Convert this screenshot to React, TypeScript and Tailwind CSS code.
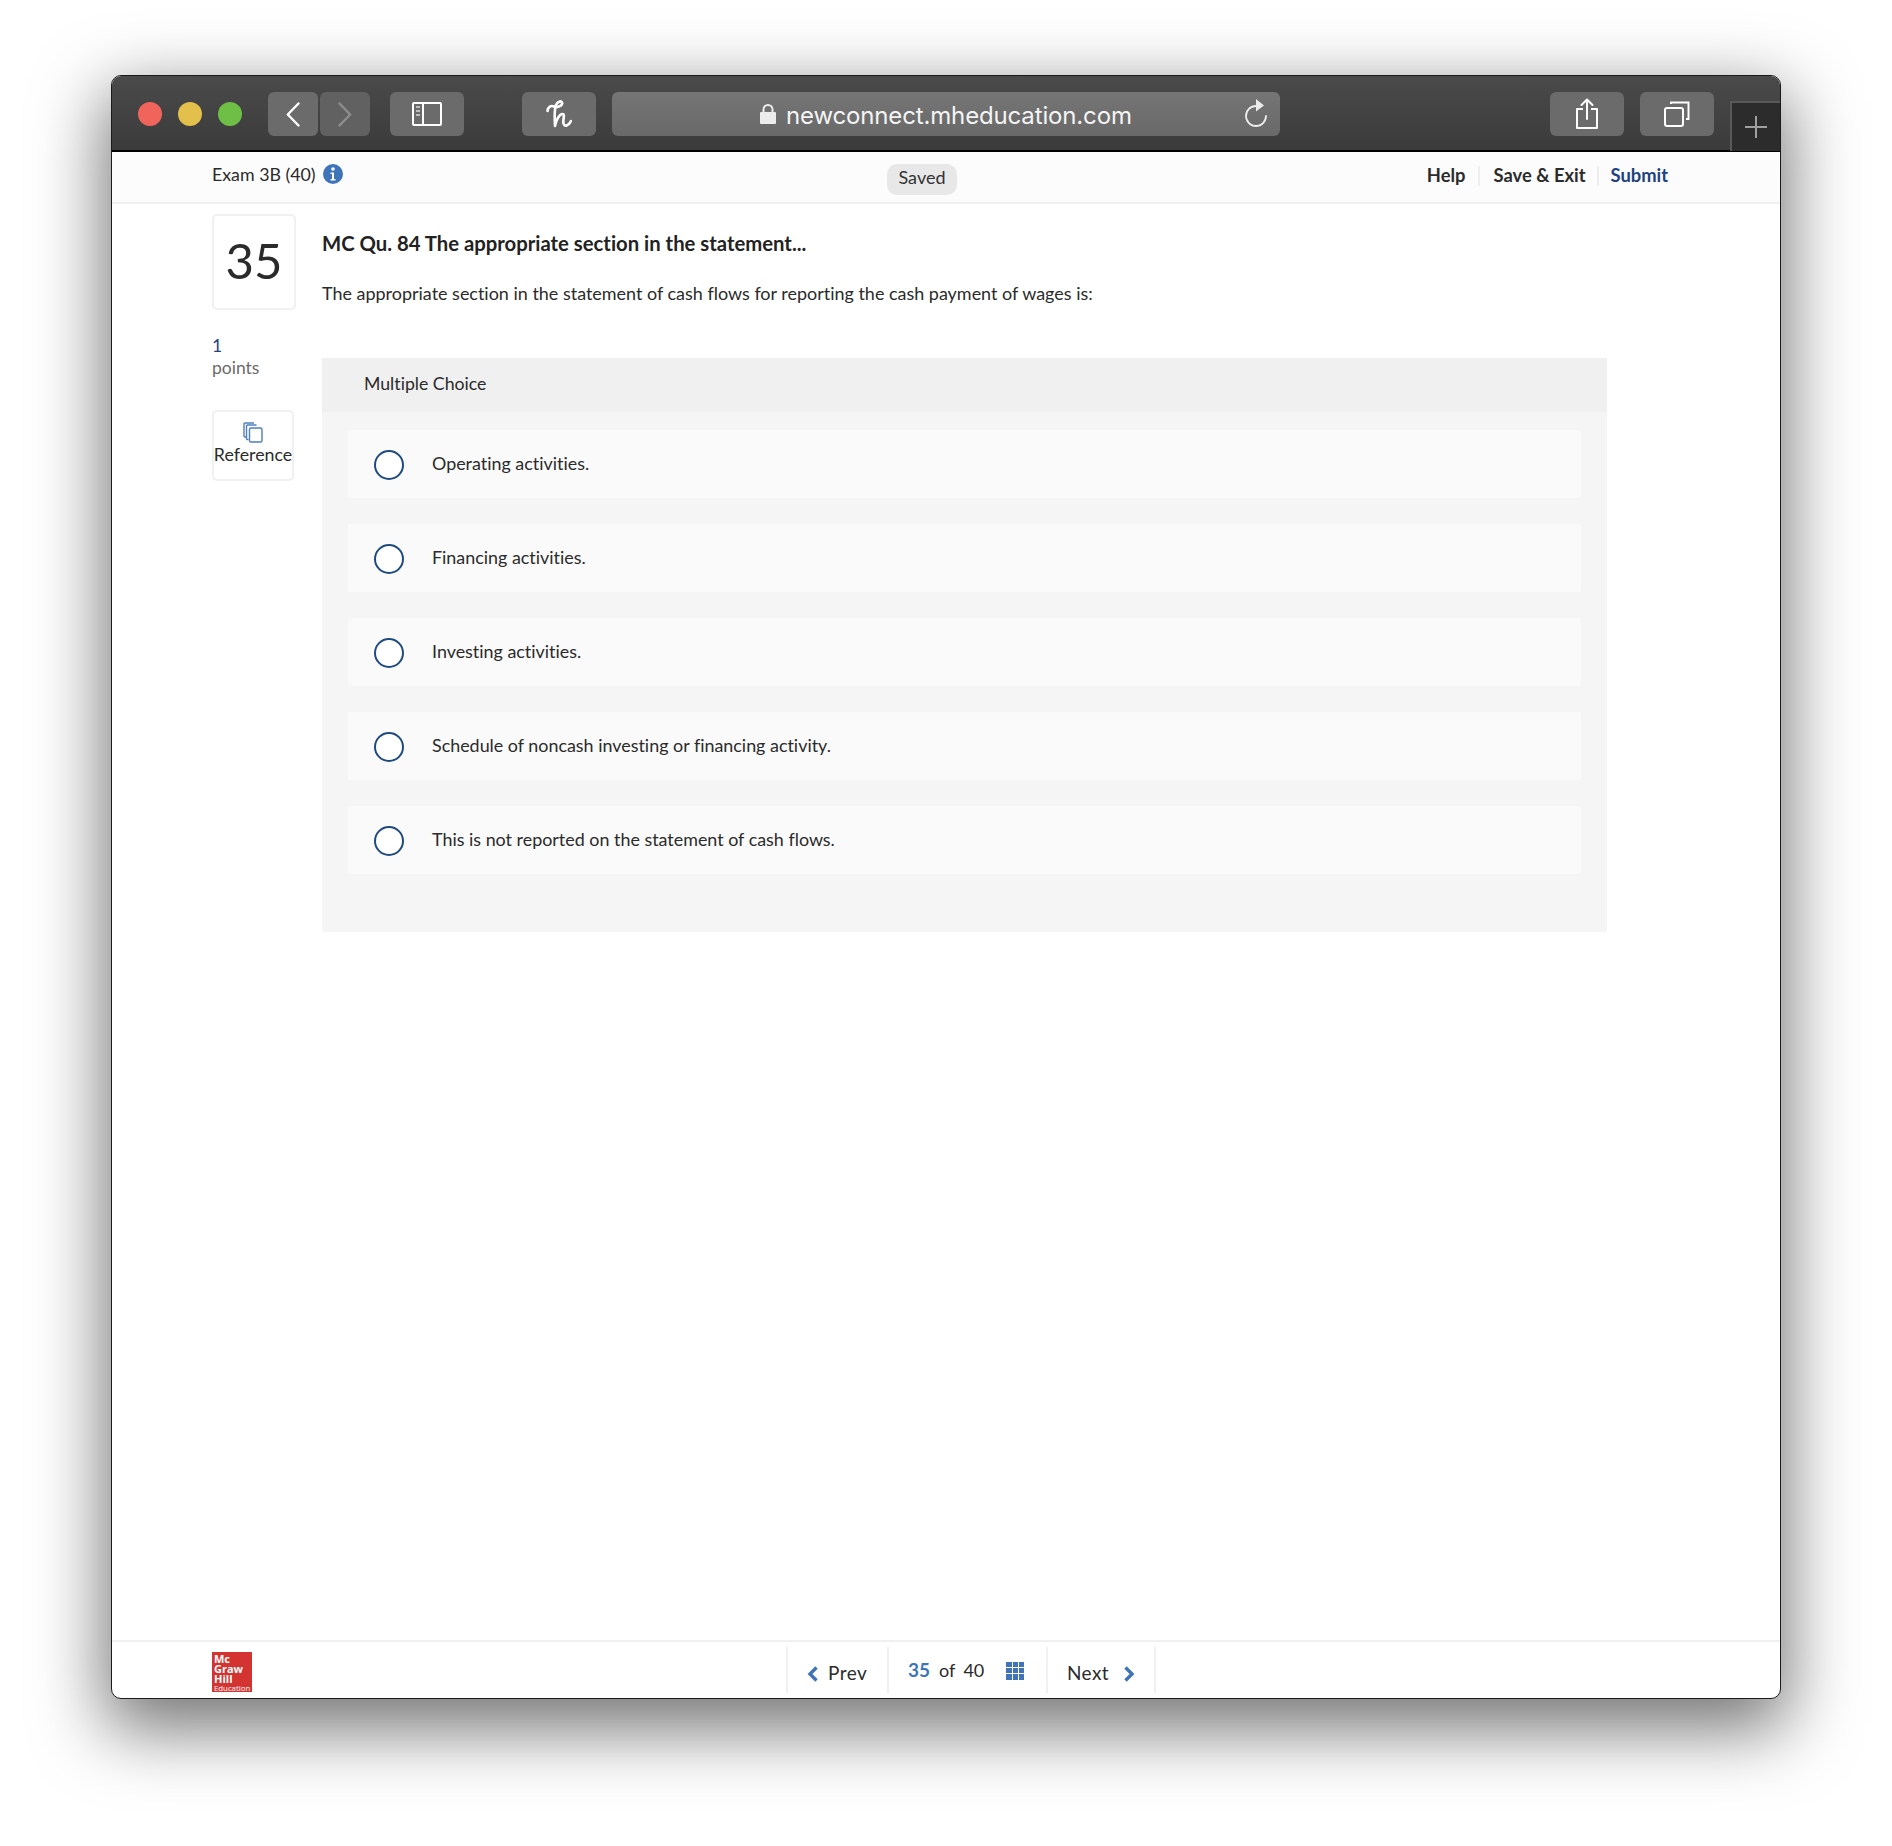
import React from "react";

const sans = "font-['Lato','Open_Sans',sans-serif] [font-variant-ligatures:none]";

function ToolBtn({ w, dim, children, className = "" }: { w: string; dim?: boolean; children?: React.ReactNode; className?: string }) {
  return (
    <div className={`${w} h-[44px] rounded-[6px] flex items-center justify-center ${dim ? "bg-[#616161]" : "bg-[#6b6b6b]"} ${className}`}>
      {children}
    </div>
  );
}

const options = [
  "Operating activities.",
  "Financing activities.",
  "Investing activities.",
  "Schedule of noncash investing or financing activity.",
  "This is not reported on the statement of cash flows.",
];

export default function App() {
  return (
    <div className={`w-[1892px] h-[1846px] bg-white pt-[75px] pl-[111px] ${sans}`}>
      <div className="w-[1670px] h-[1624px] rounded-[10px] border border-[#1a1a1a] bg-white flex flex-col overflow-hidden shadow-[0_24px_70px_6px_rgba(0,0,0,0.55)]">
        {/* title bar */}
        <div className="h-[76px] shrink-0 bg-[linear-gradient(#4a4a4a,#3b3b3b)] border-b-2 border-black flex items-start pt-[16px] pl-[26px]">
          <div className="flex gap-[16px] pt-[10px] mr-[26px]">
            <div className="w-[24px] h-[24px] rounded-full bg-[#f1645c]" />
            <div className="w-[24px] h-[24px] rounded-full bg-[#e3bf4b]" />
            <div className="w-[24px] h-[24px] rounded-full bg-[#6fbf46]" />
          </div>
          <div className="flex gap-[2px] mr-[20px]">
            <ToolBtn w="w-[50px]">
              <svg width="14" height="25" viewBox="0 0 14 25" fill="none" stroke="#fff" strokeWidth="2.4" strokeLinecap="round" strokeLinejoin="round"><path d="M12.5 1.5 1.8 12.5l10.7 11" /></svg>
            </ToolBtn>
            <ToolBtn w="w-[50px]" dim>
              <svg width="14" height="25" viewBox="0 0 14 25" fill="none" stroke="#8e8e8e" strokeWidth="2.4" strokeLinecap="round" strokeLinejoin="round"><path d="M1.5 1.5 12.2 12.5 1.5 23.5" /></svg>
            </ToolBtn>
          </div>
          <ToolBtn w="w-[74px]" className="mr-[58px]">
            <svg width="30" height="24" viewBox="0 0 30 24" fill="none"><rect x="1" y="1" width="28" height="22" rx="1" stroke="#fff" strokeWidth="2" /><path d="M11 1v22" stroke="#fff" strokeWidth="2" /><path d="M4 5h4M4 9h4M4 13h4" stroke="#bdbdbd" strokeWidth="2" /></svg>
          </ToolBtn>
          <ToolBtn w="w-[74px]" className="mr-[16px]">
            <svg width="26" height="28" viewBox="0 0 26 28" fill="none" stroke="#fff" strokeWidth="2.600" strokeLinecap="round" strokeLinejoin="round"><path d="M1.500 11C2 7 5 5 8 6.500C12 8.500 17 5 16 2.500C15 .5 11.500 1.500 10 5C8.500 9 8.500 18 9 26C10 20 13.500 14 16.500 14C19.500 14 16.500 20 17.500 23.500C18.500 27 22.500 26 25 21" /></svg>
          </ToolBtn>
          <div className="w-[668px] h-[44px] rounded-[6px] bg-[linear-gradient(#757575,#696969)] flex items-center pl-[148px] pr-[11px] mr-[270px]">
            <svg width="16" height="20" viewBox="0 0 16 20" className="mr-[10px] shrink-0"><path d="M3.500 9V5.500a4.500 4.500 0 0 1 9 0V9" fill="none" stroke="#ececec" strokeWidth="2" /><rect x="0" y="8" width="16" height="12" rx="1" fill="#ececec" /></svg>
            <span className="font-['Inter',sans-serif] text-[24px] pt-[3px] leading-[39px] text-[#f4f4f4] whitespace-nowrap tracking-[-0.15px]">newconnect.mheducation.com</span>
            <svg width="26" height="30" viewBox="0 0 26 30" className="ml-auto" fill="none"><path d="M13 7A10 10 0 1 0 23 17" stroke="#ececec" strokeWidth="1.800" strokeLinecap="round" /><path d="M13 0l8 6.500-8 6z" fill="#ececec" /></svg>
          </div>
          <ToolBtn w="w-[74px]" className="mr-[16px]">
            <svg width="24" height="32" viewBox="0 0 24 32" fill="none" stroke="#fff" strokeWidth="2" strokeLinejoin="round"><path d="M8 11H2v19h20V11h-6" /><path d="M12 21V2M6.500 7 12 1.500 17.500 7" strokeLinecap="round" /></svg>
          </ToolBtn>
          <ToolBtn w="w-[74px]" className="mr-[16px]">
            <svg width="26" height="26" viewBox="0 0 26 26" fill="none" stroke="#fff" strokeWidth="2"><rect x="1" y="7" width="18" height="18" rx="2" /><path d="M7 3V1.500h17.500V18H22" /></svg>
          </ToolBtn>
          <div className="w-[50px] h-[50px] mt-[9px] bg-[#2c2c2c] border-l-2 border-t-2 border-[#595959] flex items-center justify-center">
            <svg width="22" height="22" viewBox="0 0 22 22" stroke="#a0a0a0" strokeWidth="2"><path d="M11 0v22M0 11h22" /></svg>
          </div>
        </div>

        {/* exam header */}
        <div className="h-[52px] shrink-0 bg-[#fcfcfc] border-b-2 border-[#f0f0f0] flex items-start pl-[100px] pr-[112px] text-[#2b2b2b]">
          <div className="w-[675px] flex items-center h-[44px] text-[17.800px] gap-[7px]">
            <span>Exam 3B (40)</span>
            <svg width="20" height="20" viewBox="0 0 20 20"><circle cx="10" cy="10" r="10" fill="#3f75b8" /><circle cx="10" cy="5" r="1.800" fill="#fff" /><path d="M7.500 8.500h3.500v6.500h1.500v1.500h-5V15h1.500v-5H7.500z" fill="#fff" /></svg>
          </div>
          <div className="mt-[12px] w-[70px] h-[31px] rounded-[10px] bg-[#e8e8e8] flex items-center justify-center text-[18px] leading-[27px] pb-[4px] text-[#333]">Saved</div>
          <div className="ml-auto flex items-center h-[47px] text-[18.350px] font-bold">
            <span>Help</span>
            <span className="w-[2px] h-[20px] bg-[#eeeeee] mx-[13px]" />
            <span>Save &amp; Exit</span>
            <span className="w-[2px] h-[20px] bg-[#eeeeee] mx-[11.500px]" />
            <span className="text-[#1d4380]">Submit</span>
          </div>
        </div>

        {/* main */}
        <div className="flex flex-1 pl-[100px] pt-[10px] text-[#2b2b2b]">
          <div className="w-[110px] shrink-0">
            <div className="w-[84px] h-[96px] rounded-[5px] border-2 border-[#f0f0f0] flex items-center justify-center pb-[3px] text-[49px] leading-none">35</div>
            <div className="mt-[25px] text-[17.500px] leading-[22px] text-[#1d4380]">1</div>
            <div className="text-[17.500px] leading-[22px] text-[#6b6b6b]">points</div>
            <div className="mt-[31px] w-[82px] h-[71px] rounded-[5px] border-2 border-[#f0f0f0] overflow-hidden flex flex-col items-center pt-[10px] text-[17.800px]">
              <svg width="20" height="21" viewBox="0 0 20 21" fill="none" stroke="#4f7fc0" strokeWidth="1.400" className="shrink-0"><path d="M3 15H2a1 1 0 0 1-1-1V2a1 1 0 0 1 1-1h9" /><path d="M5.500 17.500H4.500a1 1 0 0 1-1-1V4a1 1 0 0 1 1-1h9" /><rect x="6.500" y="6" width="12.500" height="14" rx="1.500" /></svg>
              <span className="leading-[21px] mt-[1px] whitespace-nowrap">Reference</span>
            </div>
          </div>
          <div className="w-[1285px]">
            <h1 className="mt-[17px] text-[20.300px] leading-[24px] font-bold text-[#222]">MC Qu. 84 The appropriate section in the statement...</h1>
            <p className="mt-[26px] text-[17.970px] leading-[24px]">The appropriate section in the statement of cash flows for reporting the cash payment of wages is:</p>
            <div className="mt-[53px] h-[574px] rounded-[2px] bg-[#f5f5f5]">
              <div className="h-[54px] bg-[#f0f0f0] pl-[42px] pb-[2px] flex items-center text-[17.700px]">Multiple Choice</div>
              <div className="pt-[18px] px-[26px] flex flex-col gap-[26px]">
                {options.map((o) => (
                  <div key={o} className="h-[68px] rounded-[2px] bg-[#fafafa] flex items-center pl-[26px] gap-[28px] text-[17.900px]">
                    <span className="w-[30px] h-[30px] rounded-full border-2 border-[#1e4a80] bg-white shrink-0 mt-[1px]" />
                    <span className="pb-[2px]">{o}</span>
                  </div>
                ))}
              </div>
            </div>
          </div>
        </div>

        {/* footer */}
        <div className="h-[58px] shrink-0 border-t-2 border-[#f0f0f0] flex pl-[100px] text-[#2b2b2b]">
          <div className="mt-[10px] w-[40px] h-[40px] bg-[#d33431] text-white font-bold text-[11px] leading-[10px] pl-[2px] pt-[2px] mr-[534px] font-['Open_Sans',sans-serif] overflow-hidden">
            <div>Mc</div>
            <div>Graw</div>
            <div>Hill</div>
            <div className="text-[7.800px] font-normal leading-[8px] whitespace-nowrap">Education</div>
          </div>
          <div className="mt-[5px] h-[46px] flex text-[19px]">
            <div className="w-[103px] border-x-2 border-[#f0f0f0] flex items-center pl-[19px] pt-[7px] gap-[10px]">
              <svg width="11" height="16" viewBox="0 0 11 16" fill="none" stroke="#3f75b8" strokeWidth="3.400"><path d="M9.500 1.500 3 8l6.500 6.500" /></svg>
              <span className="tracking-[0.5px]">Prev</span>
            </div>
            <div className="w-[157px] flex items-center pl-[19px] pt-[1px] text-[18px]">
              <span className="font-bold text-[#3f75b8] text-[19px]">35</span>
              <span className="ml-[9px]">of</span>
              <span className="ml-[8px]">40</span>
              <div className="ml-[22px] w-[18px] h-[18px] grid grid-cols-3 gap-[1px]">
                {Array.from({ length: 9 }).map((_, i) => <span key={i} className="bg-[#3f75b8]" />)}
              </div>
            </div>
            <div className="w-[110px] border-x-2 border-[#f0f0f0] flex items-center pl-[19px] pt-[7px] gap-[15px]">
              <span className="tracking-[0.4px]">Next</span>
              <svg width="11" height="16" viewBox="0 0 11 16" fill="none" stroke="#3f75b8" strokeWidth="3.400"><path d="M1.500 1.500 8 8l-6.500 6.500" /></svg>
            </div>
          </div>
        </div>
      </div>
    </div>
  );
}
